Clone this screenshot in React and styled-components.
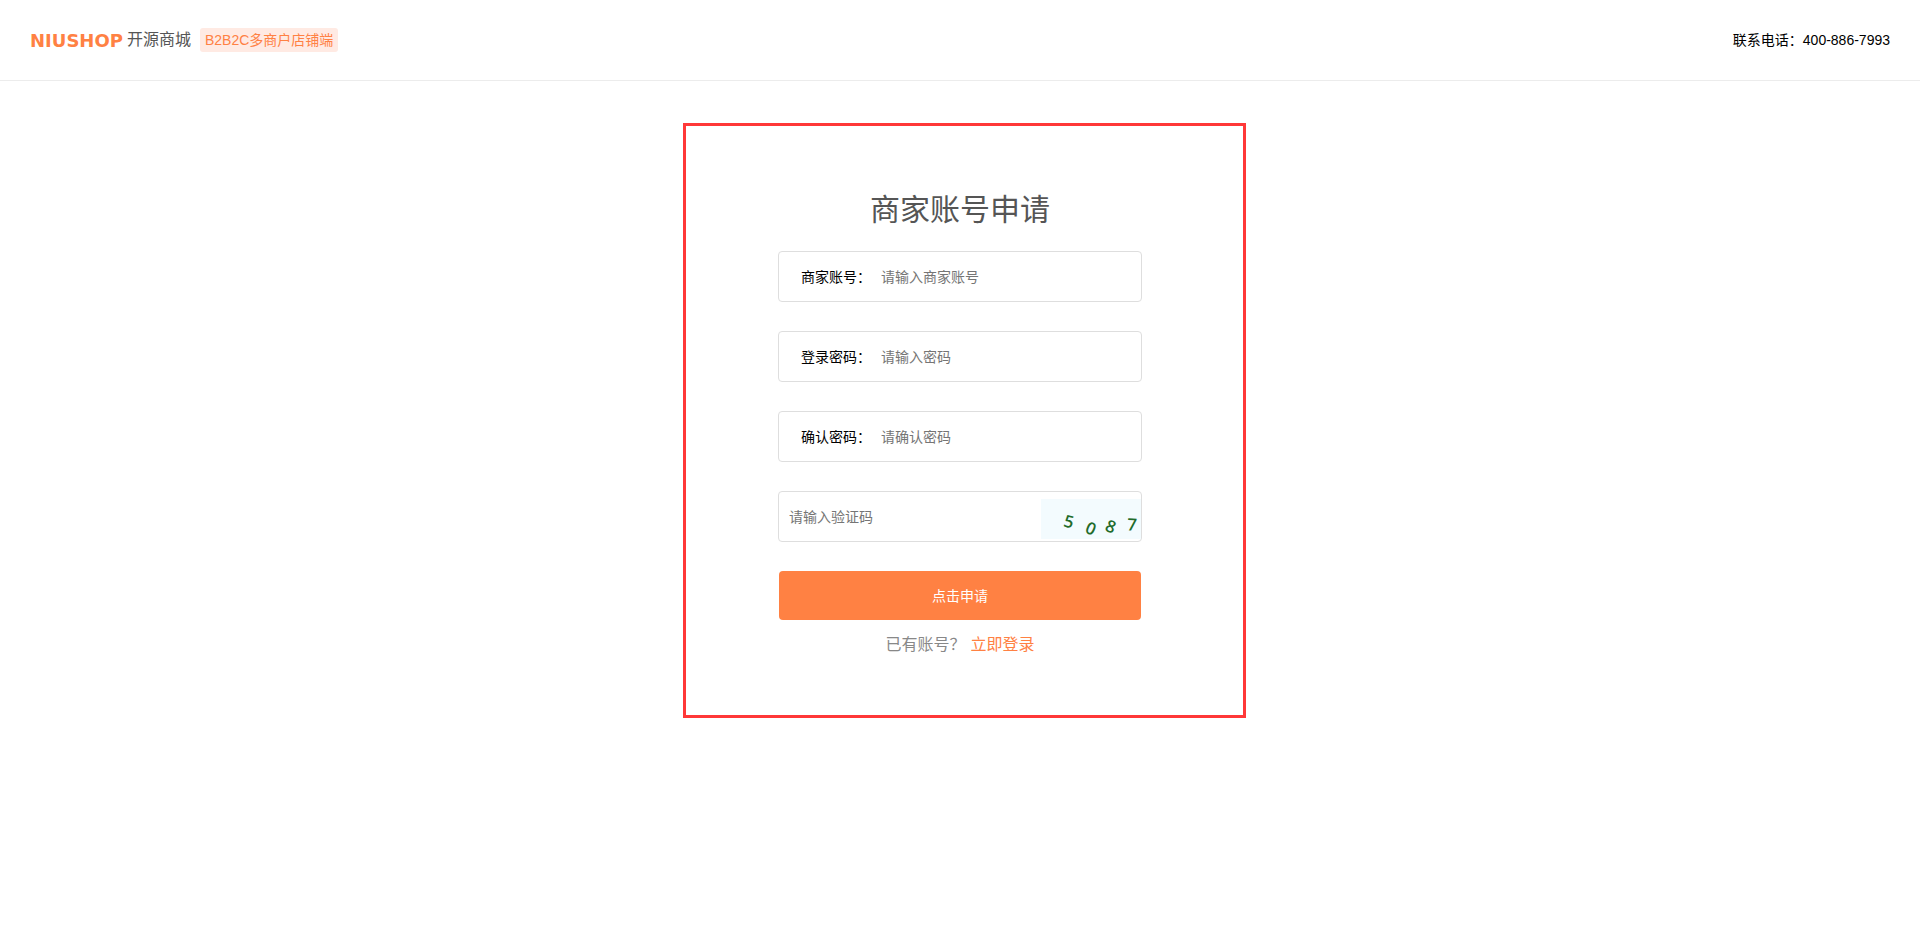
import React, { useState } from 'react';
import styled, { ThemeProvider, createGlobalStyle } from 'styled-components';

const theme = {
  primary: '#ff8143',
  primaryPale: '#ffeae3',
  title: '#555',
  muted: '#888',
  placeholder: '#757575',
  line: '#ececec',
  fieldLine: '#dedede',
  frame: '#ff3838',
};

const fields = [
  { name: 'username', label: '商家账号：', type: 'text', placeholder: '请输入商家账号' },
  { name: 'password', label: '登录密码：', type: 'password', placeholder: '请输入密码' },
  { name: 'confirm', label: '确认密码：', type: 'password', placeholder: '请确认密码' },
];

const captchaDigits = [
  { char: '5', x: 28, y: 22, angle: 14 },
  { char: '0', x: 50, y: 29, angle: 24 },
  { char: '8', x: 70, y: 27, angle: 22 },
  { char: '7', x: 91, y: 25, angle: 4 },
];

const Captcha = () => (
  <CaptchaImage viewBox="0 0 100 40" role="img" aria-label="验证码">
    <rect width="100" height="40" fill="#f3fbfe" />
    {captchaDigits.map(({ char, x, y, angle }) => (
      <text
        key={char}
        transform={`translate(${x} ${y}) rotate(${angle})`}
        textAnchor="middle"
        dominantBaseline="central"
      >
        {char}
      </text>
    ))}
  </CaptchaImage>
);

const App = () => {
  const [values, setValues] = useState({});

  const handleChange = e => {
    setValues({ ...values, [e.target.name]: e.target.value });
  };

  return (
    <ThemeProvider theme={theme}>
      <GlobalStyle />
      <Header>
        <Brand>
          <Wordmark>NIUSHOP</Wordmark>
          <BrandName>开源商城</BrandName>
          <Badge>B2B2C多商户店铺端</Badge>
        </Brand>
        <Phone>联系电话：400-886-7993</Phone>
      </Header>

      <Main>
        <Panel>
          <Title>商家账号申请</Title>
          <Form onSubmit={e => e.preventDefault()}>
            {fields.map(({ name, label, type, placeholder }) => (
              <Field key={name}>
                <Label htmlFor={name}>{label}</Label>
                <Input
                  id={name}
                  name={name}
                  type={type}
                  placeholder={placeholder}
                  value={values[name] || ''}
                  onChange={handleChange}
                />
              </Field>
            ))}
            <Field>
              <Input
                name="captcha"
                type="text"
                aria-label="验证码"
                placeholder="请输入验证码"
                value={values.captcha || ''}
                onChange={handleChange}
              />
              <Captcha />
            </Field>
            <Submit type="submit">点击申请</Submit>
          </Form>
          <LoginHint>
            已有账号？<LoginLink href="#login">立即登录</LoginLink>
          </LoginHint>
        </Panel>
      </Main>
    </ThemeProvider>
  );
};

const GlobalStyle = createGlobalStyle`
  * {
    box-sizing: border-box;
  }

  body {
    margin: 0;
    background: #fff;
    color: #000;
    font: 14px/20px "Liberation Sans", "Noto Sans CJK SC", sans-serif;
  }

  input,
  button {
    font: inherit;
  }
`;

const Header = styled.header`
  display: flex;
  align-items: center;
  justify-content: space-between;
  height: 81px;
  padding: 0 30px;
  border-bottom: 1px solid ${props => props.theme.line};
`;

const Brand = styled.div`
  display: flex;
  align-items: center;
`;

const Wordmark = styled.span`
  padding-top: 2px;
  font-family: "DejaVu Sans", sans-serif;
  font-size: 18px;
  font-weight: bold;
  color: ${props => props.theme.primary};
`;

const BrandName = styled.span`
  margin-left: 4px;
  font-size: 16px;
  color: ${props => props.theme.title};
`;

const Badge = styled.span`
  margin-left: 9px;
  padding: 2px 5px;
  border-radius: 3px;
  background: ${props => props.theme.primaryPale};
  color: ${props => props.theme.primary};
`;

const Phone = styled.span`
  white-space: nowrap;
`;

const Main = styled.main`
  display: flex;
  justify-content: center;
  padding: 42px 0 42px 9px;
`;

const Panel = styled.section`
  padding: 61px 101px 58px 92px;
  border: 3px solid ${props => props.theme.frame};
`;

const Title = styled.h1`
  margin: 0 0 19px;
  font-size: 30px;
  font-weight: normal;
  line-height: 45px;
  text-align: center;
  color: ${props => props.theme.title};
`;

const Form = styled.form`
  display: flex;
  flex-direction: column;
  gap: 29px;
  width: 364px;
`;

const Field = styled.div`
  display: flex;
  align-items: center;
  height: 51px;
  border: 1px solid ${props => props.theme.fieldLine};
  border-radius: 4px;
`;

const Label = styled.label`
  flex: none;
  width: 92px;
  padding-left: 22px;
`;

const Input = styled.input`
  flex: 1;
  min-width: 0;
  height: 100%;
  padding: 0 10px;
  border: 0;
  outline: 0;
  background: transparent;

  &::placeholder {
    color: ${props => props.theme.placeholder};
  }
`;

const CaptchaImage = styled.svg`
  flex: none;
  align-self: flex-end;
  width: 100px;
  height: 40px;
  margin-bottom: 2px;
  overflow: visible;

  text {
    font-family: "Open Sans", sans-serif;
    font-size: 17px;
    font-weight: 600;
    fill: #1f6b2b;
  }
`;

const Submit = styled.button`
  height: 49px;
  margin: 0 1px;
  border: 0;
  border-radius: 4px;
  background: ${props => props.theme.primary};
  color: #fff;
  cursor: pointer;
`;

const LoginHint = styled.p`
  margin: 13px 0 0;
  font-size: 16px;
  line-height: 24px;
  text-align: center;
  color: ${props => props.theme.muted};
`;

const LoginLink = styled.a`
  margin-left: 5px;
  color: ${props => props.theme.primary};
  text-decoration: none;
`;

export default App;
